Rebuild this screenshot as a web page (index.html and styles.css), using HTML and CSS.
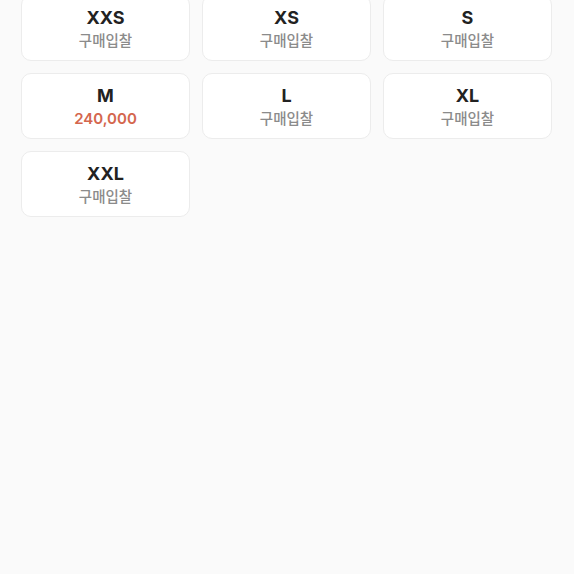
FILE: index.html
```html
<!DOCTYPE html>
<html lang="ko">
<head>
  <meta charset="UTF-8" />
  <meta name="viewport" content="width=device-width, initial-scale=1.0" />
  <title>사이즈 선택</title>
  <link rel="stylesheet" href="styles.css">
</head>
<body>
  <div class="sizes">
    <div class="size-card"><span class="size">XXS</span><span class="price">구매입찰</span></div>
    <div class="size-card"><span class="size">XS</span><span class="price">구매입찰</span></div>
    <div class="size-card"><span class="size">S</span><span class="price">구매입찰</span></div>
    <div class="size-card"><span class="size">M</span><span class="price has-price">240,000</span></div>
    <div class="size-card"><span class="size">L</span><span class="price">구매입찰</span></div>
    <div class="size-card"><span class="size">XL</span><span class="price">구매입찰</span></div>
    <div class="size-card"><span class="size">XXL</span><span class="price">구매입찰</span></div>
  </div>
</body>
</html>
```

FILE: styles.css
```css
body {
  margin: 0;
  background: #fafafa;
  font-family: Inter, "Noto Sans CJK KR", sans-serif;
  overflow: hidden;
}

.sizes {
  display: grid;
  grid-template-columns: repeat(3, 169px);
  gap: 12px;
  padding: 0 22px 0 21px;
  margin-top: -5px;
}

.size-card {
  height: 66px;
  box-sizing: border-box;
  padding-top: 2px;
  background: #fff;
  border: 1px solid #ececec;
  border-radius: 10px;
  display: flex;
  flex-direction: column;
  align-items: center;
  justify-content: center;
  gap: 2px;
}

.size {
  font-size: 18px;
  font-weight: 700;
  color: #222;
  line-height: 22px;
}

.price {
  font-size: 14.5px;
  font-weight: 500;
  color: #8b8b8b;
  line-height: 20px;
}

.price.has-price {
  color: #d4664e;
  font-weight: 600;
  font-size: 15px;
}
```
